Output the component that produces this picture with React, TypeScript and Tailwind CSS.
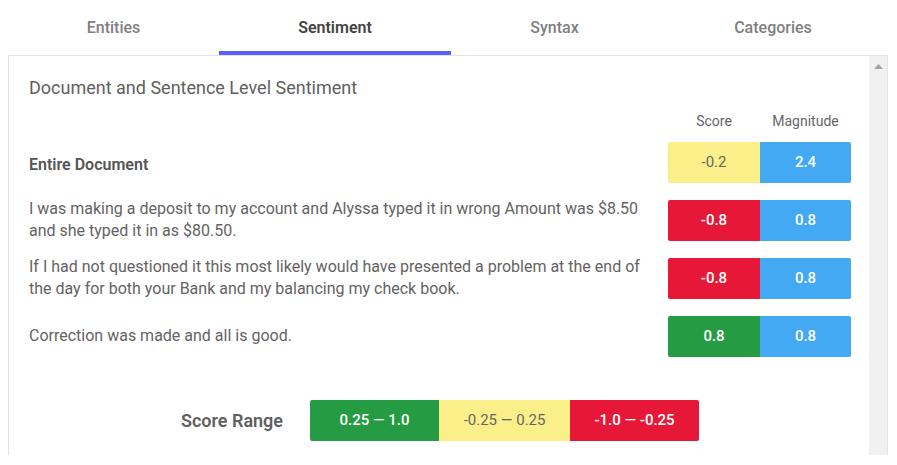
import React from "react";

type Row = { text: string; bold?: boolean; score: string; scoreBg: string; scoreText: string; mag: string };

const rows: Row[] = [
  { text: "Entire Document", bold: true, score: "-0.2", scoreBg: "bg-[#fbef8a]", scoreText: "text-[#666666] font-normal", mag: "2.4" },
  {
    text: "I was making a deposit to my account and Alyssa typed it in wrong Amount was $8.50 and she typed it in as $80.50.",
    score: "-0.8",
    scoreBg: "bg-[#e71837]",
    scoreText: "text-white font-medium",
    mag: "0.8",
  },
  {
    text: "If I had not questioned it this most likely would have presented a problem at the end of the day for both your Bank and my balancing my check book.",
    score: "-0.8",
    scoreBg: "bg-[#e71837]",
    scoreText: "text-white font-medium",
    mag: "0.8",
  },
  { text: "Correction was made and all is good.", score: "0.8", scoreBg: "bg-[#259b43]", scoreText: "text-white font-medium", mag: "0.8" },
];

const tabs = [
  { label: "Entities", w: "w-[211px]", active: false },
  { label: "Sentiment", w: "w-[232px]", active: true },
  { label: "Syntax", w: "w-[207px]", active: false },
  { label: "Categories", w: "w-[230px]", active: false },
];

export default function App() {
  return (
    <div className="w-[897px] h-[465px] overflow-hidden bg-white font-['Roboto',sans-serif]">
      <div className="ml-[8px] w-[880px] h-[55px] flex">
        {tabs.map((t) => (
          <div
            key={t.label}
            className={
              t.active
                ? `${t.w} h-[55px] flex items-center justify-center pt-[5px] border-b-4 border-[#5a5ff6] text-[16px] font-semibold text-[#444444]`
                : `${t.w} h-[55px] flex items-center justify-center pt-[5px] border-b-4 border-transparent text-[16px] font-medium text-[#808080]`
            }
          >
            {t.label}
          </div>
        ))}
      </div>
      <div className="ml-[8px] w-[880px] h-[400px] flex border-t border-l border-[#e2e2e2]">
        <div className="flex-1 pl-[20px] pr-[18px] pt-[20px]">
          <div className="text-[18px] leading-[24px] text-[#5f5f5f]">Document and Sentence Level Sentiment</div>
          <div className="mt-[12px] flex justify-end text-[14px] leading-[18px] text-[#666666]">
            <div className="w-[92px] text-center">Score</div>
            <div className="w-[91px] text-center">Magnitude</div>
          </div>
          <div className="mt-[10px] flex flex-col gap-[14px]">
            {rows.map((r, i) => (
              <div key={i} className="flex items-center min-h-[44px]">
                <div
                  className={
                    r.bold
                      ? "flex-1 mr-[16px] pt-[5px] text-[16px] leading-[22px] font-semibold text-[#555555]"
                      : "flex-1 mr-[16px] text-[16px] leading-[22px] text-[#636363]"
                  }
                >
                  {r.text}
                </div>
                <div className="flex h-[41px] text-[15px]">
                  <div className={`w-[92px] rounded-l-[2px] flex items-center justify-center ${r.scoreBg} ${r.scoreText}`}>
                    {r.score}
                  </div>
                  <div className="w-[91px] rounded-r-[2px] flex items-center justify-center bg-[#43a9f3] text-white font-medium">
                    {r.mag}
                  </div>
                </div>
              </div>
            ))}
          </div>
          <div className="mt-[42px] flex items-center justify-center">
            <div className="text-[18px] font-semibold text-[#5f5f5f] mr-[27px]">Score Range</div>
            <div className="flex h-[41px] text-[15px]">
              <div className="w-[129px] rounded-l-[2px] bg-[#259b43] text-white font-medium flex items-center justify-center">
                0.25 — 1.0
              </div>
              <div className="w-[131px] bg-[#fbef8a] text-[#666666] flex items-center justify-center">-0.25 — 0.25</div>
              <div className="w-[129px] rounded-r-[2px] bg-[#e71837] text-white font-medium flex items-center justify-center">
                -1.0 — -0.25
              </div>
            </div>
          </div>
        </div>
        <div className="w-[19px] h-full bg-[#f1f1f1] border-r border-[#e4e4e4] flex justify-center pt-[8px]">
          <svg width="9" height="5" viewBox="0 0 9 5">
            <path d="M0 5 L4.5 0 L9 5 Z" fill="#a3a3a3" />
          </svg>
        </div>
      </div>
    </div>
  );
}
